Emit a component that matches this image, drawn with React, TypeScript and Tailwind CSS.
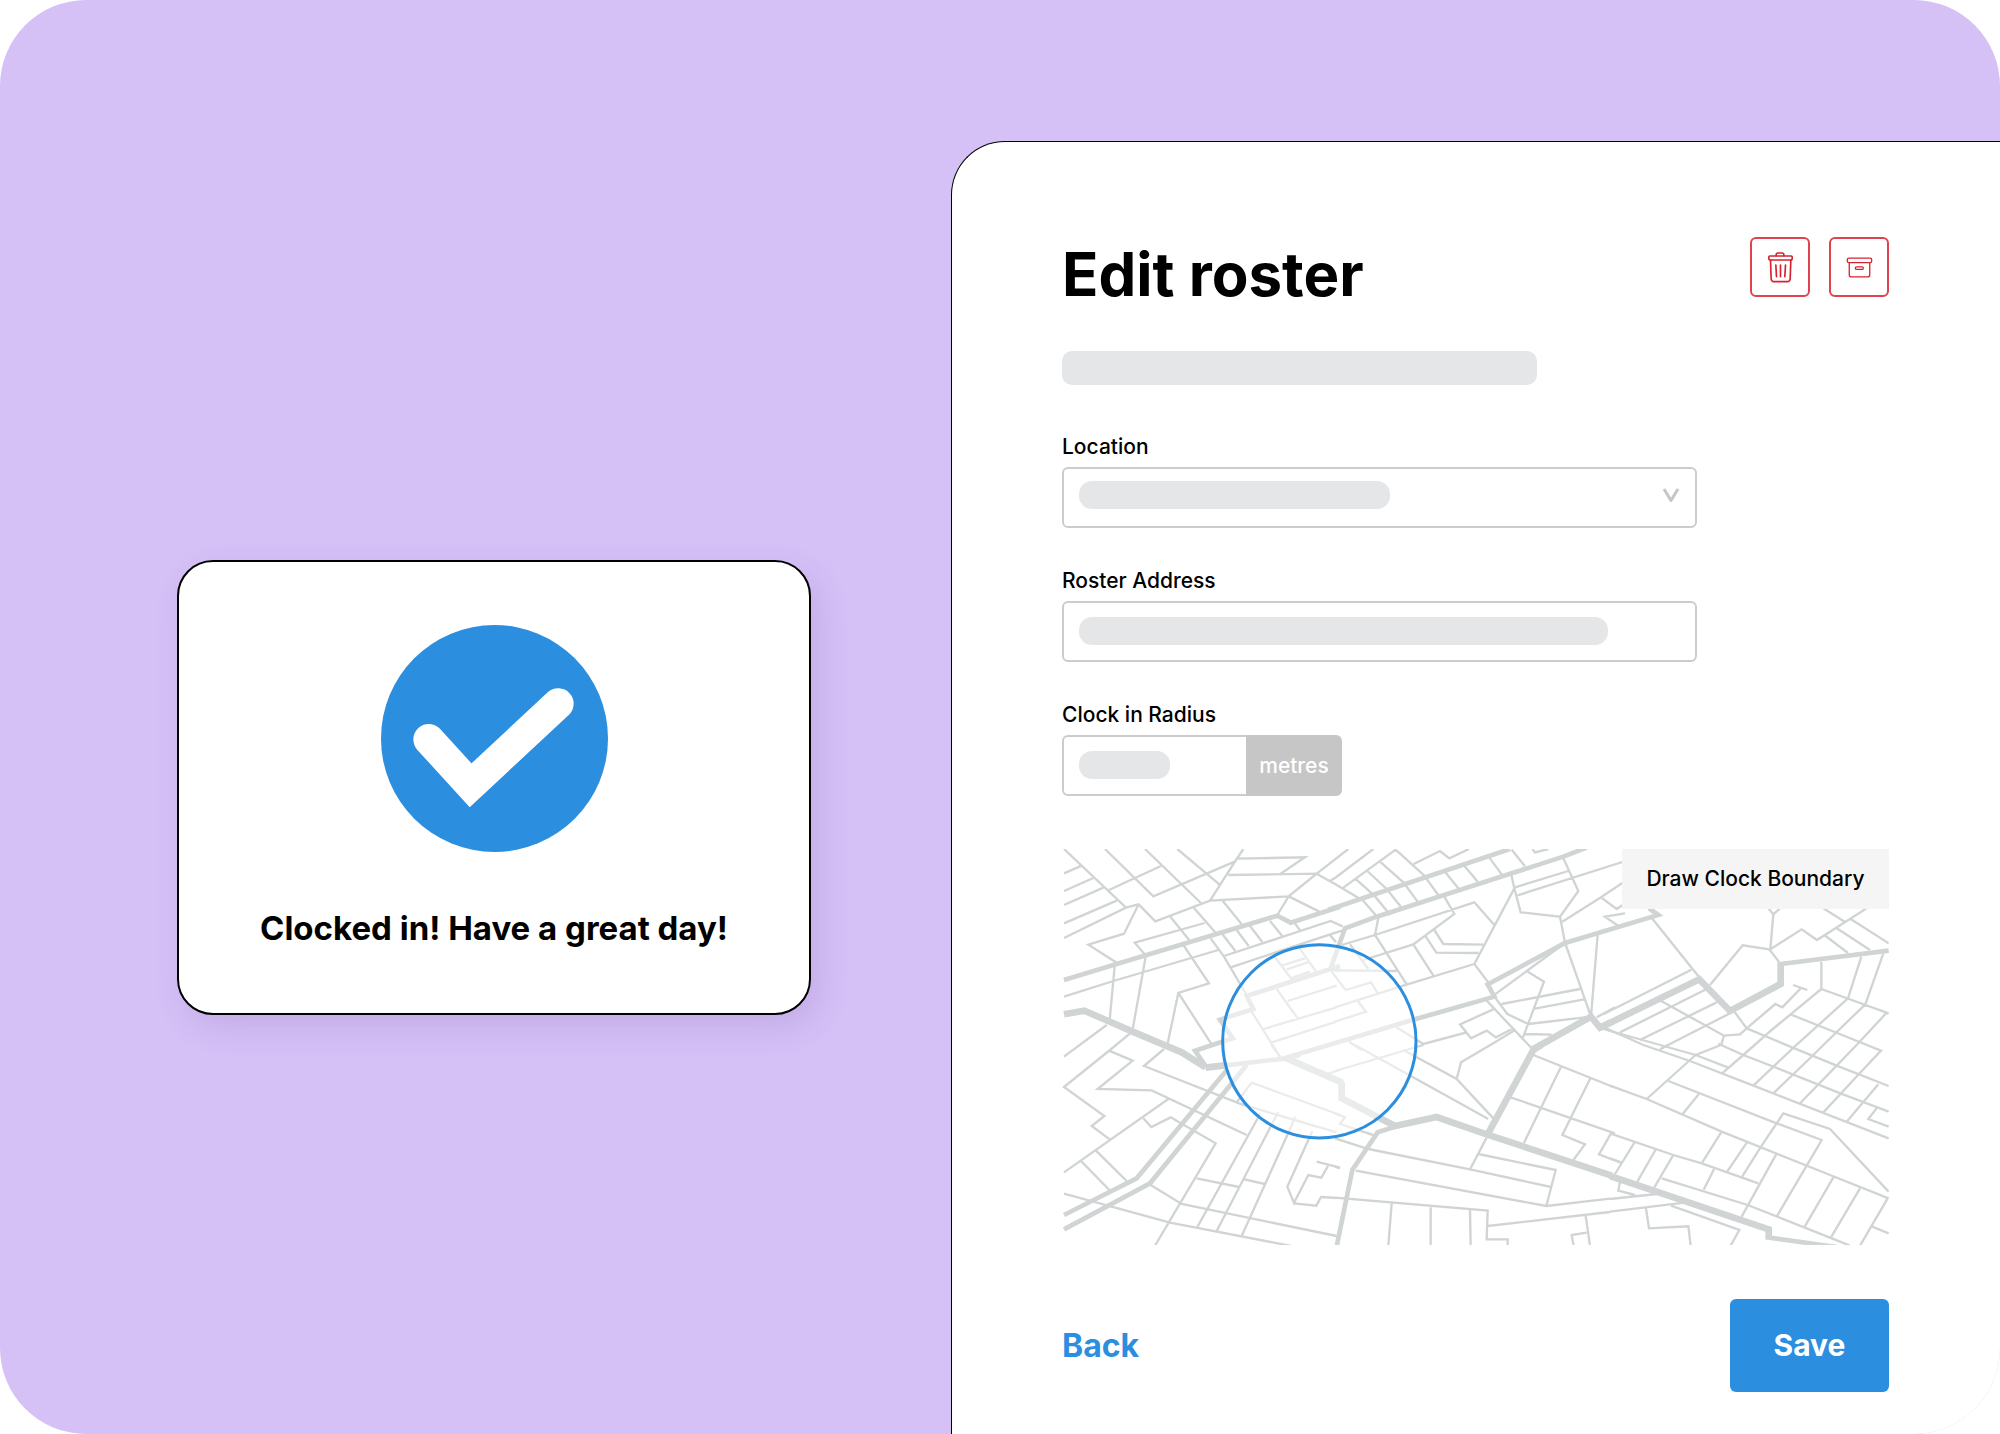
import { FC, ReactNode } from "react";

interface FieldProps {
  id: string;
  label: string;
  children: ReactNode;
}

interface MapTile {
  x: number;
  y: number;
  streets: string;
  roads: string;
  mains: string;
}

// Street network, split into six tiles that share one coordinate space
const mapTiles: MapTile[] = [
  {
    x: -12,
    y: -12,
    streets:
      "M12 12L198 188M12 85L65 62M12 138L100 99M12 180L130 128M12 235L170 167M12 279L198 188L236 178L286 229L450 167L686 154M236 178L192 266L85 299L170 353M135 12L280 154L524 50M255 12L426 177M352 12L478 118M550 12L528 45L450 167M147 135L303 63M528 41L735 37L662 86M505 90L770 86L686 154L652 210M686 154L778 200M488 167L545 238M400 187L468 265M330 214L388 286M256 330L224 293L434 234M165 353L149 525M258 330L218 553M12 455L160 408L475 315M370 300L447 415L355 444L322 600M355 444L455 598M452 280L492 335L560 450M575 500L660 636M487 267L526 318M530 255L566 303M570 243L607 291M630 228L666 272M492 333L812 228L848 244M512 367L820 265L848 256M704 234L720 256M808 268L828 292M640 330L697 405M715 305L770 382M664 362L735 340M680 374L745 351M692 400L750 380M650 432L713 520M683 468L830 422M610 552L830 487M635 592L830 530M812 376L840 376",
    roads:
      "M12 405L170 357L460 270L652 212L692 233L840 185M840 363L560 453L580 492L480 524L518 580L405 617L438 665",
    mains: "M12 508L73 497L218 560L365 622L437 667",
  },
  {
    x: 813,
    y: -12,
    streets:
      "M-55 86L40 12M-15 108L0 99L115 12M25 128L182 14L268 92M-55 86L0 117L72 160M60 100L118 152L166 210M97 78L155 132L200 188M135 50L205 112L248 170M80 162L125 214M272 98L312 153M328 78L370 130M388 62L428 110M463 38L500 88M530 14L570 64M236 57L315 18L343 40L402 12M592 12L600 22L640 12M20 300L120 270L418 172L478 240M130 218L120 270L215 418M328 155L358 207L235 298L85 345M235 298L297 395M45 298L100 372M272 274L304 323L430 324M298 255L325 297L445 299M538 130L418 357L462 415M528 85L538 130L557 202L675 215L730 138L683 35M540 127L700 78M548 151L900 39M675 215L690 293L768 515M682 230L798 157L890 95M798 157L845 192L875 172M870 205L810 215L850 243M690 294L480 448M788 268L768 515M575 378L627 410L563 580M0 487L205 422L418 357M500 477L735 432M600 491L747 463M580 537L768 515M478 455L517 507L580 537M455 467L595 615M570 567L650 569M475 493L375 538L408 580L455 557L483 577L535 550M265 597L395 562M182 545L265 597M785 517L840 487M815 553L860 570M0 376L185 378M-10 380L32 435L108 412L128 445M0 530L93 500L68 468M42 590L80 615",
    roads:
      "M-20 194L525 12M-13 370L30 250L125 215L530 85L685 35L755 8M250 520L478 455L458 418L690 294L970 210L942 190M-160 642L250 520",
    mains: "M590 615L768 515L795 548L828 532",
  },
  {
    x: 1638,
    y: -12,
    streets:
      "M120 212L270 400M244 374L-20 508M300 420L398 301L478 313L508 352M475 190L490 208L510 190M490 208L481 313L575 253L621 285L770 190M640 190L704 230M643 270L714 324M678 248L780 315M722 222L836 295M30 562L290 432M90 585L320 472M155 610L360 505M152 467L342 572L390 568L410 550L373 500M342 572L333 602M410 550L496 477L517 487L572 430M549 420L592 435M634 350L634 432M754 335L714 460M820 325L766 478",
    roads: "M512 357L836 317",
    mains: "M-30 548L268 403L360 498L512 417L512 352",
  },
  {
    x: -12,
    y: 588,
    streets:
      "M12 35L140 -60M213 -37L150 15L12 126L133 213L95 243L150 284M147 17L218 47L113 132L275 136L560 270M312 12L252 63L545 178L830 262M12 382L325 162M250 220L274 246L332 217L467 295L285 602M62 347L148 435M108 317L200 408M12 446L330 533L700 604M272 420L365 477L830 573M592 222L411 548M600 205L592 222M655 200L470 558M705 215L697 237L545 573M757 258L682 425L702 473L745 390L784 398L804 363M770 350L840 368M702 475L769 482L783 456L830 459M410 400L537 426M553 403L615 417M530 172L575 113L840 210M635 0L660 35M790 90L840 75",
    roads:
      "M12 510L230 400L500 76M12 553L270 415L560 60M437 68L680 40L720 30",
    mains: "M437 68L495 61M680 40L845 112",
  },
  {
    x: 813,
    y: 588,
    streets:
      "M60 0L460 222M205 15L365 102L475 220M365 102L378 52L475 -5L540 -45M0 78L265 0M595 30L835 126M678 65L567 293M766 100L682 270L750 298L715 345M527 157L840 265M828 265L792 328L860 354M455 278L405 373M430 327L662 375L634 483M0 280L100 312L405 373L648 426M62 377L634 483L825 461M0 458L458 497L455 583L518 583L518 602M170 475L160 602M287 487L287 602M405 493L407 602M458 543L825 501M752 512L765 602M755 563L710 570L716 602M0 205L30 217L15 237L120 272M0 365L15 370",
    roads: "M180 245L128 262L52 375L5 604",
    mains:
      "M15 108L20 118L20 160L180 243L305 216L455 268L830 392M458 268L595 15L620 0",
  },
  {
    x: 1638,
    y: 588,
    streets:
      "M336 85L400 30L485 -45L634 -168M430 122L548 10L714 -140M490 145L610 30L640 0L766 -122M568 177L680 62L740 0L830 -97M640 202L747 87L813 17L704 -27L541 -92M710 230L805 118M-20 -54L100 0L240 48L430 122L836 280M325 -4L333 0L400 30L548 88L693 146L836 200M410 -50L548 8L680 62L836 123M634 -168L836 -95M333 0L257 30L240 45L110 162M-20 -48L257 30L355 68M150 13L175 0M175 108L500 235L635 285L500 515M266 148L218 207M0 122L110 162L335 260L585 360L836 460M335 260L275 355M411 292L350 382M395 397L453 305L520 205L660 252L836 440M500 325L395 515M670 397L583 547M750 430L663 577M833 460L750 602M787 545L836 565M0 265L190 330L275 355L445 415M75 290L15 387M138 312L82 410M190 330L133 427M0 340L33 352M155 400L413 480L720 602M312 373L281 434M30 410L25 437L75 450M0 462L140 447M0 500L230 472M183 482L388 555L362 602M108 490L117 550L235 544L242 602M836 245L775 222L800 190",
    roads: "M478 578L680 606",
    mains: "M0 393L200 460L476 553L476 584",
  },
];

const RosterMap: FC = () => (
  <svg
    viewBox="-6 0 2481 1188"
    className="block h-auto w-full"
    fill="none"
    role="img"
    aria-label="Map of the clock in area"
  >
    <g stroke="#d0d4d4">
      {mapTiles.map((tile) => (
        <g
          key={`${tile.x}:${tile.y}`}
          transform={`translate(${tile.x} ${tile.y})`}
        >
          <path d={tile.streets} strokeWidth={7} />
          <path d={tile.roads} strokeWidth={14} />
          <path d={tile.mains} strokeWidth={20} />
        </g>
      ))}
    </g>
    <circle
      cx={766}
      cy={577}
      r={290}
      fill="#fff"
      fillOpacity={0.55}
      stroke="#2c8ede"
      strokeWidth={9}
    />
  </svg>
);

const TrashIcon: FC = () => (
  <svg
    viewBox="111 95 80 93"
    className="h-[31px] w-[27px]"
    fill="none"
    stroke="currentColor"
    strokeWidth={5}
    strokeLinecap="round"
    aria-hidden="true"
  >
    <path d="M138 106v-3q0-5 5-5h13q5 0 5 5v3" />
    <rect x={116} y={107} width={70} height={12} rx={3} />
    <path d="M121 119l2 57q1 8 8 8h41q7 0 8-8l2-57M137 134l2 35M151 134v35M166 134l-2 35" />
  </svg>
);

const ArchiveIcon: FC = () => (
  <svg
    viewBox="346 109 83 64"
    className="h-[21px] w-[27px]"
    fill="none"
    stroke="currentColor"
    strokeWidth={4}
    aria-hidden="true"
  >
    <rect x={350} y={112} width={75} height={14} rx={5} />
    <path d="M356 126v37q0 7 7 7h49q7 0 7-7v-37" />
    <rect x={375} y={139} width={24} height={8} rx={3} />
  </svg>
);

const Field: FC<FieldProps> = ({ id, label, children }) => (
  <div>
    <label
      htmlFor={id}
      className="mb-2 block text-[21px] leading-6 font-medium"
    >
      {label}
    </label>
    {children}
  </div>
);

const ClockedInCard: FC = () => (
  <div className="flex w-full flex-col items-center rounded-[36px] border-2 border-black bg-white pt-[63px] pb-[62px] shadow-[8px_12px_32px_rgba(90,50,150,0.14)]">
    <svg viewBox="0 0 228 228" className="size-[227px]" aria-hidden="true">
      <circle cx={114} cy={114} r={114} fill="#2c8ede" />
      <path
        d="M48 115L90 161L178 79"
        fill="none"
        stroke="#fff"
        strokeWidth={31}
        strokeLinecap="round"
      />
    </svg>
    <p className="mt-[54px] text-[33px] leading-[45px] font-bold">
      Clocked in! Have a great day!
    </p>
  </div>
);

const EditRoster: FC = () => (
  <form className="mt-[141px] rounded-tl-[54px] border-t border-l border-black bg-white pt-[95px] pr-[111px] pb-[42px] pl-[110px]">
    <div className="flex items-start justify-between">
      <h1 className="text-[60px] leading-[74px] font-bold">Edit roster</h1>
      <div className="flex gap-[19px] text-[#d8232f]">
        <button
          type="button"
          aria-label="Delete roster"
          className="flex size-[60px] items-center justify-center rounded-md border-2 border-[#de444e]"
        >
          <TrashIcon />
        </button>
        <button
          type="button"
          aria-label="Archive roster"
          className="flex size-[60px] items-center justify-center rounded-md border-2 border-[#de444e]"
        >
          <ArchiveIcon />
        </button>
      </div>
    </div>
    <div className="mt-10 h-[34px] w-[475px] rounded-[10px] bg-[#e5e6e8]" />

    <div className="mt-[50px] flex max-w-[635px] flex-col gap-[41px]">
      <Field id="location" label="Location">
        <div className="relative">
          <select
            id="location"
            className="block h-[61px] w-full appearance-none rounded-md border-2 border-[#cccccc] bg-white px-4"
          />
          <div className="pointer-events-none absolute inset-x-[17px] top-[14px] flex h-7 items-center justify-between">
            <span className="h-full w-[311px] rounded-[13px] bg-[#e5e6e8]" />
            <svg
              viewBox="0 0 18 14"
              className="h-[14px] w-[18px]"
              fill="none"
              stroke="#c6c6c6"
              strokeWidth={3}
              aria-hidden="true"
            >
              <path d="M2 1L9 12.500L16 1" />
            </svg>
          </div>
        </div>
      </Field>
      <Field id="address" label="Roster Address">
        <div className="relative">
          <input
            id="address"
            type="text"
            className="block h-[61px] w-full rounded-md border-2 border-[#cccccc] px-4"
          />
          <span className="pointer-events-none absolute top-4 left-[17px] h-7 w-[529px] rounded-[13px] bg-[#e5e6e8]" />
        </div>
      </Field>
      <Field id="radius" label="Clock in Radius">
        <div className="relative flex w-[280px]">
          <input
            id="radius"
            type="text"
            className="h-[61px] min-w-0 flex-1 rounded-l-md border-2 border-r-0 border-[#cccccc] px-4"
          />
          <span className="flex w-24 items-center justify-center rounded-r-md bg-[#c6c6c6] text-[21px] font-medium text-white">
            metres
          </span>
          <span className="pointer-events-none absolute top-4 left-[17px] h-7 w-[91px] rounded-[13px] bg-[#e5e6e8]" />
        </div>
      </Field>
    </div>

    <div className="relative mt-[53px]">
      <RosterMap />
      <button
        type="button"
        className="absolute top-0 right-0 h-[60px] w-[267px] bg-[#f5f5f5] text-[21px] font-medium"
      >
        Draw Clock Boundary
      </button>
    </div>

    <div className="mt-[54px] flex items-center justify-between">
      <a href="#" className="text-[32px] font-bold text-[#2c8ede]">
        Back
      </a>
      <button
        type="submit"
        className="h-[93px] w-[159px] rounded-md bg-[#2c8ede] text-[30px] font-bold text-white"
      >
        Save
      </button>
    </div>
  </form>
);

const App: FC = () => {
  return (
    <div className="bg-white font-['Inter',sans-serif] text-black">
      <main className="grid min-h-screen grid-cols-[951fr_1049fr] overflow-hidden rounded-[86px] bg-[#d5c1f6]">
        <section className="flex items-center pt-[141px] pr-[140px] pl-[177px]">
          <ClockedInCard />
        </section>
        <EditRoster />
      </main>
    </div>
  );
};

export default App;
